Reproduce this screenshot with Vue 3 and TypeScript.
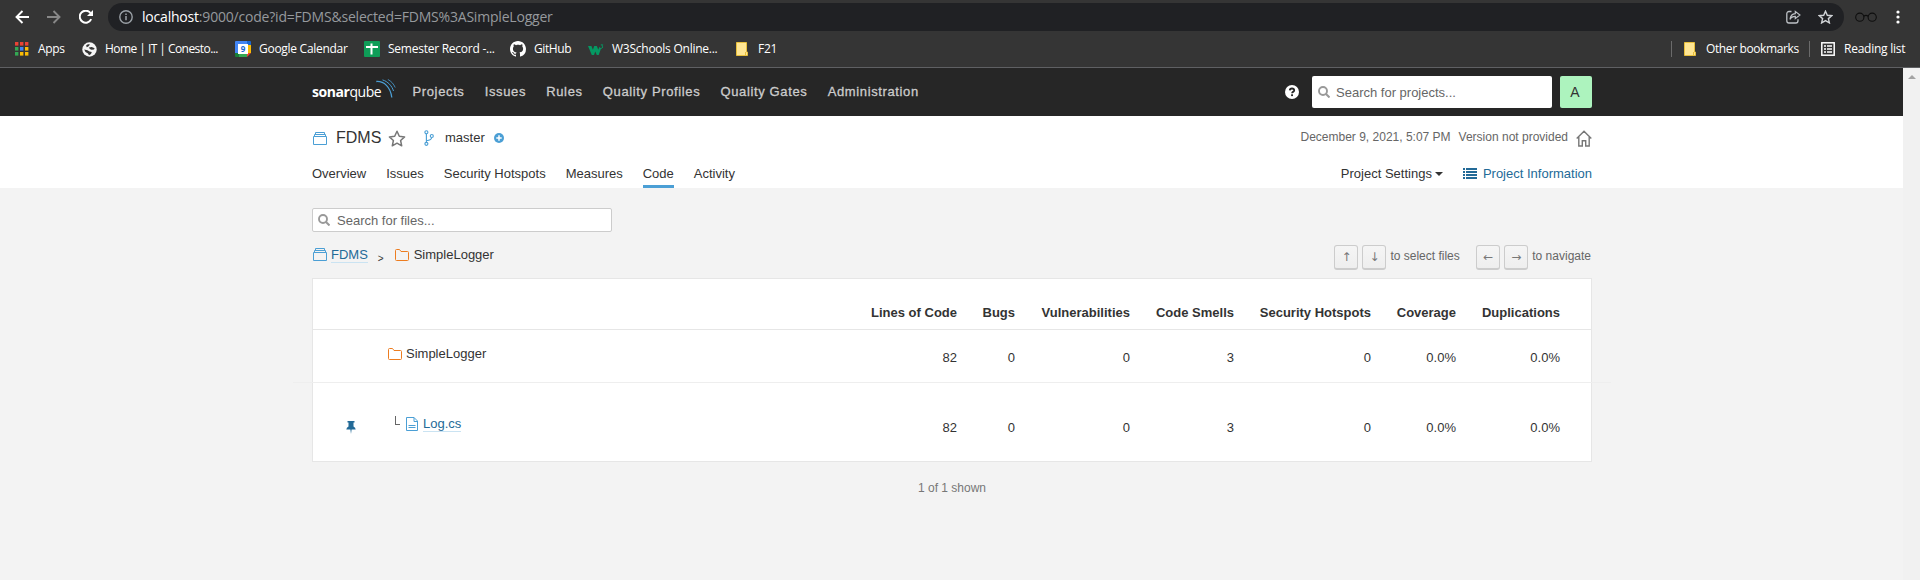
<script setup lang="ts">
interface Bookmark { icon: string; label: string; width: number; spacing: number }
interface Column { label: string; width: number }
interface FileRow { name: string; kind: 'folder' | 'file'; values: string[] }

const bookmarks: Bookmark[] = [
  { icon: 'apps', label: 'Apps', width: 67, spacing: -0.35 },
  { icon: 'globe', label: 'Home | IT | Conesto...', width: 153, spacing: -0.55 },
  { icon: 'calendar', label: 'Google Calendar', width: 129, spacing: -0.28 },
  { icon: 'sheet', label: 'Semester Record -...', width: 146, spacing: -0.25 },
  { icon: 'github', label: 'GitHub', width: 79, spacing: -0.4 },
  { icon: 'w3', label: 'W3Schools Online...', width: 146, spacing: -0.25 },
  { icon: 'note', label: 'F21', width: 60, spacing: -0.25 },
]
const navItems: string[] = ['Projects', 'Issues', 'Rules', 'Quality Profiles', 'Quality Gates', 'Administration']
const tabs: string[] = ['Overview', 'Issues', 'Security Hotspots', 'Measures', 'Code', 'Activity']
const columns: Column[] = [
  { label: 'Lines of Code', width: 100 },
  { label: 'Bugs', width: 58 },
  { label: 'Vulnerabilities', width: 115 },
  { label: 'Code Smells', width: 104 },
  { label: 'Security Hotspots', width: 137 },
  { label: 'Coverage', width: 85 },
  { label: 'Duplications', width: 104 },
]
const rows: FileRow[] = [
  { name: 'SimpleLogger', kind: 'folder', values: ['82', '0', '0', '3', '0', '0.0%', '0.0%'] },
  { name: 'Log.cs', kind: 'file', values: ['82', '0', '0', '3', '0', '0.0%', '0.0%'] },
]
const appColors: string[] = ['#ea4335', '#ea4335', '#ea4335', '#34a853', '#4285f4', '#fbbc05', '#34a853', '#fbbc05', '#fbbc05']
</script>

<template>
  <div class="window">
    <header class="chrome">
      <div class="toolbar">
        <svg width="14" height="14" viewBox="0 0 14 14"><path d="M14 7H1.5M7.5 1L1.5 7l6 6" fill="none" stroke="#fff" stroke-width="1.9" /></svg>
        <svg class="forward" width="14" height="14" viewBox="0 0 14 14"><path d="M0 7h12.5M6.5 1l6 6-6 6" fill="none" stroke="#888" stroke-width="1.9" /></svg>
        <svg class="reload" width="14" height="14" viewBox="0 0 14 14"><path d="M12.2 9.2A6 6 0 1 1 11.5 3" fill="none" stroke="#fff" stroke-width="2" /><path d="M14 0v6H8z" fill="#fff" /></svg>
        <div class="omnibox">
          <svg width="14" height="14" viewBox="0 0 14 14"><circle cx="7" cy="7" r="6.2" fill="none" stroke="#9aa0a6" stroke-width="1.4" /><path d="M7 6v4.3M7 3.4v1.5" stroke="#9aa0a6" stroke-width="1.5" /></svg>
          <span class="url"><b>localhost</b>:9000/code?id=FDMS&amp;selected=FDMS%3ASimpleLogger</span>
          <svg class="share" width="15" height="14" viewBox="0 0 15 14"><path d="M5.5 1.5H3A2.2 2.2 0 0 0 .8 3.7v7.1A2.2 2.2 0 0 0 3 13h6.8a2.2 2.2 0 0 0 2.2-2.2V9.2" fill="none" stroke="#bdc1c6" stroke-width="1.3" /><path d="M9.3 1.4L13.9 5 9.3 8.6V6.4C6.6 6.4 5 7.3 4 9.4 4.3 6.5 6 3.9 9.3 3.6z" fill="none" stroke="#bdc1c6" stroke-width="1.2" /></svg>
          <svg class="star" width="15" height="14" viewBox="0 0 15 14"><path d="M7.5 1.2l1.8 4.1 4.4.4-3.3 2.9 1 4.3-3.9-2.3-3.9 2.3 1-4.3-3.3-2.9 4.4-.4z" fill="none" stroke="#d0d3d6" stroke-width="1.4" /></svg>
        </div>
        <svg class="glasses" width="22" height="10" viewBox="0 0 22 10"><circle cx="4.8" cy="5.2" r="4.1" fill="none" stroke="#0e0e0e" stroke-width="1.1" /><circle cx="17.2" cy="5.2" r="4.1" fill="none" stroke="#0e0e0e" stroke-width="1.1" /><path d="M8.8 4.2q2.2-1.6 4.4 0" fill="none" stroke="#0e0e0e" stroke-width="1.1" /></svg>
        <svg class="dots" width="4" height="14" viewBox="0 0 4 14"><circle cx="2" cy="2" r="1.6" fill="#fff" /><circle cx="2" cy="7" r="1.6" fill="#fff" /><circle cx="2" cy="12" r="1.6" fill="#fff" /></svg>
      </div>
      <div class="bookmarks">
        <div v-for="b in bookmarks" :key="b.label" class="bookmark" :class="b.icon" :style="{ width: b.width + 'px', letterSpacing: b.spacing + 'px' }">
          <svg v-if="b.icon === 'apps'" width="14" height="14" viewBox="0 0 14 14"><rect v-for="(c, i) in appColors" :key="i" :x="(i % 3) * 5" :y="Math.floor(i / 3) * 5" width="3.4" height="3.6" :fill="c" /></svg>
          <svg v-else-if="b.icon === 'globe'" width="15" height="15" viewBox="0 0 15 15"><circle cx="7.5" cy="7.5" r="7.2" fill="#f5f5f5" /><path d="M4.2 3.2Q6 1.800 8 2.600L6.300 4.600 4.600 5.200zM6.800 5.600l3-.6 2.800 1.200-.6 1.300-2.500.2-1.600-.6zM2.200 7.600l3.300.6 2 1.400 2.300.4-.8 2-2 1.200L6 11.500 3.500 10z" fill="#353535" /></svg>
          <svg v-else-if="b.icon === 'calendar'" width="16" height="16" viewBox="0 0 16 16"><path d="M0 1q0-1 1-1h12v4H4v9H0z" fill="#4285f4" /><path d="M12 0h3q1 0 1 1v3h-4z" fill="#1967d2" /><path d="M12 4h4v8h-4z" fill="#fbbc04" /><path d="M4 12h8v4H4z" fill="#34a853" /><path d="M0 12h4v4H1q-1 0-1-1z" fill="#188038" /><path d="M12 16v-4h4z" fill="#ea4335" /><path d="M3 3h10v10H3z" fill="#fff" /><text x="8" y="11" text-anchor="middle" class="cal-day">9</text></svg>
          <svg v-else-if="b.icon === 'sheet'" width="16" height="16" viewBox="0 0 16 16"><rect width="16" height="16" rx="1" fill="#0f9d58" /><path d="M2 6h12M7.5 2.5v11" stroke="#fff" stroke-width="2" /></svg>
          <svg v-else-if="b.icon === 'github'" width="16" height="16" viewBox="0 0 16 16"><path fill="#fff" d="M8 0C3.58 0 0 3.58 0 8c0 3.54 2.29 6.53 5.47 7.59.4.07.55-.17.55-.38 0-.19-.01-.82-.01-1.49-2.01.37-2.53-.49-2.69-.94-.09-.23-.48-.94-.82-1.13-.28-.15-.68-.52-.01-.53.63-.01 1.08.58 1.23.82.72 1.21 1.87.87 2.33.66.07-.52.28-.87.51-1.07-1.78-.2-3.64-.89-3.64-3.95 0-.87.31-1.59.82-2.15-.08-.2-.36-1.02.08-2.12 0 0 .67-.21 2.2.82.64-.18 1.32-.27 2-.27s1.36.09 2 .27c1.53-1.04 2.2-.82 2.2-.82.44 1.1.16 1.92.08 2.12.51.56.82 1.27.82 2.15 0 3.07-1.87 3.75-3.65 3.95.29.25.54.73.54 1.48 0 1.07-.01 1.93-.01 2.2 0 .21.15.46.55.38A8.01 8.01 0 0 0 16 8c0-4.42-3.58-8-8-8z" /></svg>
          <svg v-else-if="b.icon === 'w3'" width="16" height="11" viewBox="0 0 16 11"><path d="M0 2h3.4l1.5 3.7L6.2 2h2.6l1.5 3.7 1-2.7 1.8 1.2-2.4 6.8H8.8L7.3 7.5 6 11H3.8z" fill="#059862" /><path d="M12.8.8h2L13.800 2q2.200.8.2 2.200h-1.200" fill="none" stroke="#059862" stroke-width=".9" /></svg>
          <svg v-else width="12" height="14" viewBox="0 0 12 14"><path d="M.5.5h10V10h1v3.5H.5z" fill="#ffe694" stroke="#e8bf3b" /><path d="M9.5 13.5V10" stroke="#e8bf3b" /></svg>
          <span>{{ b.label }}</span>
        </div>
        <div class="right-bookmarks">
          <div class="bookmark note other">
            <svg width="12" height="14" viewBox="0 0 12 14"><path d="M.5.5h10V10h1v3.5H.5z" fill="#ffe694" stroke="#e8bf3b" /><path d="M9.5 13.5V10" stroke="#e8bf3b" /></svg>
            <span>Other bookmarks</span>
          </div>
          <div class="bookmark reading">
            <svg width="14" height="14" viewBox="0 0 14 14"><rect x=".8" y=".8" width="12.4" height="12.4" fill="none" stroke="#fff" stroke-width="1.5" /><path d="M3 4h2m1 0h5M3 7h2m1 0h5M3 10h2m1 0h5" stroke="#fff" stroke-width="1.7" /></svg>
            <span>Reading list</span>
          </div>
        </div>
      </div>
    </header>

    <div class="viewport">
      <main class="page">
        <nav class="global-nav">
          <div class="container nav-row">
            <div class="logo">
              <b>sonar</b><span>qube</span>
              <svg class="waves" width="20" height="19" viewBox="0 0 20 19"><path d="M.3 2.5C8 2 14.5 8 15.8 18.5" fill="none" stroke="#4b9fd5" stroke-width="1.3" /><path d="M6.5.9C12 2.5 16 7 17.5 12" fill="none" stroke="#4b9fd5" stroke-width="1" /><path d="M11.8.4C15 2 17.8 5 19.2 8.5" fill="none" stroke="#4b9fd5" stroke-width=".8" /></svg>
            </div>
            <a v-for="item in navItems" :key="item">{{ item }}</a>
            <div class="nav-right">
              <svg width="14" height="14" viewBox="0 0 14 14"><circle cx="7" cy="7" r="7" fill="#fff" /><path d="M4.8 5.4Q4.900 3.5 7 3.5t2.2 1.7Q9.2 6.2 8 6.9 7.1 7.4 7.1 8.3" fill="none" stroke="#262626" stroke-width="1.8" /><rect x="6.1" y="9.3" width="1.9" height="1.8" fill="#262626" /></svg>
              <div class="search project-search">
                <svg width="12" height="12" viewBox="0 0 12 12"><circle cx="5" cy="5" r="4" fill="none" stroke="#999" stroke-width="1.9" /><path d="M8 8l3.5 3.5" stroke="#999" stroke-width="2" /></svg>
                <span>Search for projects...</span>
              </div>
              <div class="avatar">A</div>
            </div>
          </div>
        </nav>

        <section class="context">
          <div class="container">
            <div class="project-row">
              <svg width="14" height="13" viewBox="0 0 14 13"><path d="M.5 4.5h13v8H.5zM1.5 4V2.5h11V4M2.5 2V.5h9V2" fill="none" stroke="#4b9fd5" /></svg>
              <span class="project-name">FDMS</span>
              <svg width="18" height="17" viewBox="0 0 18 17"><path d="M9 1.3l2.3 5 5.3.6-4 3.6 1.1 5.3L9 13.2l-4.7 2.6 1.1-5.3-4-3.6 5.3-.6z" fill="none" stroke="#777" stroke-width="1.5" stroke-linejoin="round" /></svg>
              <svg class="branch" width="10" height="16" viewBox="0 0 10 16"><g fill="none" stroke="#4b9fd5" stroke-width="1.15"><circle cx="2.4" cy="2.2" r="1.5" /><circle cx="2.4" cy="13.8" r="1.5" /><circle cx="7.8" cy="6" r="1.5" /><path d="M2.4 3.7v8.6M7.7 7.5Q7.5 10 2.5 10.8" /></g></svg>
              <span class="branch-name">master</span>
              <svg width="10" height="10" viewBox="0 0 10 10"><circle cx="5" cy="5" r="5" fill="#4b9fd5" /><path d="M5 2.3v5.4M2.3 5h5.4" stroke="#fff" stroke-width="1.5" /></svg>
              <div class="project-meta">
                <span>December 9, 2021, 5:07 PM</span>
                <span class="version">Version not provided</span>
                <svg width="16" height="17" viewBox="0 0 16 17"><path d="M.7 8.6L8 1.2l7.3 7.4M2.8 7v9h3.5v-5.2h3.4V16h3.5V7" fill="none" stroke="#777" stroke-width="1.4" /></svg>
              </div>
            </div>
            <div class="tab-row">
              <a v-for="tab in tabs" :key="tab" :class="{ active: tab === 'Code' }">{{ tab }}</a>
              <div class="tab-actions">
                <span>Project Settings</span>
                <i class="caret"></i>
                <svg width="14" height="11" viewBox="0 0 14 11"><path d="M0 1h2M3 1h11M0 4h2M3 4h11M0 7h2M3 7h11M0 10h2M3 10h11" stroke="#236a97" stroke-width="1.8" /></svg>
                <span class="info-link">Project Information</span>
              </div>
            </div>
          </div>
        </section>

        <div class="container content">
          <div class="search file-search">
            <svg width="12" height="12" viewBox="0 0 12 12"><circle cx="5" cy="5" r="4" fill="none" stroke="#999" stroke-width="1.9" /><path d="M8 8l3.5 3.5" stroke="#999" stroke-width="2" /></svg>
            <span>Search for files...</span>
          </div>
          <div class="crumb-row">
            <div class="crumbs">
              <svg width="14" height="13" viewBox="0 0 14 13"><path d="M.5 4.5h13v8H.5zM1.5 4V2.5h11V4M2.5 2V.5h9V2" fill="none" stroke="#4b9fd5" /></svg>
              <a class="link">FDMS</a>
              <span class="sep">&gt;</span>
              <svg width="14" height="12" viewBox="0 0 14 12"><path d="M.5 10.5v-9q0-1 1-1h3l1.5 2h6.500q1 0 1 1v7q0 1-1 1h-11q-1 0-1-1z" fill="none" stroke="#ed7d20" /></svg>
              <span class="crumb-name">SimpleLogger</span>
            </div>
            <div class="shortcuts">
              <kbd>↑</kbd><kbd>↓</kbd><span class="select-hint">to select files</span>
              <kbd>←</kbd><kbd>→</kbd><span>to navigate</span>
            </div>
          </div>

          <div class="panel">
            <div class="row head">
              <div v-for="c in columns" :key="c.label" class="cell" :style="{ width: c.width + 'px' }">{{ c.label }}</div>
            </div>
            <div v-for="r in rows" :key="r.name" class="row" :class="r.kind">
              <div v-if="r.kind === 'folder'" class="name">
                <svg width="14" height="12" viewBox="0 0 14 12"><path d="M.5 10.5v-9q0-1 1-1h3l1.5 2h6.500q1 0 1 1v7q0 1-1 1h-11q-1 0-1-1z" fill="none" stroke="#ed7d20" /></svg>
                <span>{{ r.name }}</span>
              </div>
              <div v-else class="name">
                <svg class="pin" width="10" height="13" viewBox="0 0 10 13"><path d="M1.5 0h7v1.4h-1v4q2 1 2.2 3H5.6L5 13l-.6-4.600H.3q.2-2 2.2-3v-4h-1z" fill="#236a97" /></svg>
                <i class="elbow"></i>
                <svg width="12" height="14" viewBox="0 0 12 14"><path d="M.5.5h7.5l3.5 3.5v9.500H.5zM8 .5V4.5h3.5M2.500 8.500h7M2.500 10.500h7" fill="none" stroke="#4b9fd5" /></svg>
                <a class="link">{{ r.name }}</a>
              </div>
              <div v-for="(v, i) in r.values" :key="i" class="cell" :style="{ width: columns[i].width + 'px' }">{{ v }}</div>
            </div>
          </div>
          <p class="count">1 of 1 shown</p>
        </div>
      </main>
      <aside class="scrollbar"><i></i></aside>
    </div>
  </div>
</template>

<style>
body { margin: 0; background: #f3f3f3; overflow: hidden; }
</style>

<style scoped>
* { box-sizing: border-box; }
svg { display: block; flex: none; }
.window { width: 1920px; height: 580px; overflow: hidden; font-family: "Liberation Sans", Arial, sans-serif; font-size: 13px; color: #333; white-space: nowrap; }
.chrome { height: 68px; background: #353535; border-bottom: 1px solid #5f6063; font-family: "Open Sans", sans-serif; color: #fff; }
.toolbar { height: 34px; display: flex; align-items: center; padding-left: 15px; }
.forward { margin-left: 18px; }
.reload { margin-left: 18px; }
.omnibox { width: 1736px; height: 28px; margin-left: 15px; border-radius: 14px; background: #202124; display: flex; align-items: center; padding: 0 11px; }
.url { margin-left: 9px; font-size: 14px; line-height: 20px; letter-spacing: -0.2px; color: #96999d; }
.url b { font-weight: 400; color: #fff; }
.share { margin-left: auto; }
.star { margin-left: 17px; }
.glasses { margin-left: 11px; }
.dots { margin-left: 19px; }
.bookmarks { height: 30px; display: flex; align-items: center; padding-left: 15px; }
.bookmark { display: flex; align-items: center; height: 30px; font-size: 12px; letter-spacing: -0.25px; flex: none; }
.bookmark span { margin-left: 8px; padding-bottom: 2px; }
.apps span { margin-left: 9px; }
.w3 svg { margin: 1px 0 0 -1px; }
.w3 span { margin-left: 8px; }
.note svg { margin-left: 1px; }
.note span { margin-left: 10px; }
.cal-day { font: 700 8px "Open Sans", sans-serif; fill: #1967d2; letter-spacing: 0; }
.right-bookmarks { display: flex; margin-left: auto; align-items: center; width: 249px; }
.right-bookmarks::before { content: ""; width: 1px; height: 16px; background: #6b6b6b; margin-right: 11px; }
.other { width: 126px; letter-spacing: -0.38px; }
.reading { width: 100px; }
.reading::before { content: ""; width: 1px; height: 16px; background: #6b6b6b; margin-right: 11px; }
.reading span { margin-left: 9px; }

.viewport { display: flex; height: 512px; }
.page { width: 1903px; background: #f3f3f3; }
.scrollbar { width: 17px; background: #f1f1f1; padding-top: 7px; }
.scrollbar i { display: block; margin: 0 auto; width: 0; height: 0; border: 4px solid transparent; border-top: 0; border-bottom-color: #a3a3a3; }
.container { width: 1280px; margin-left: 312px; }
.global-nav { height: 48px; background: #262626; }
.nav-row { display: flex; align-items: center; height: 48px; }
.nav-row a { color: #ccc; font-size: 13px; letter-spacing: 0.63px; margin-right: 20.2px; padding-bottom: 2px; -webkit-text-stroke: 0.3px #ccc; }
.logo { position: relative; width: 100.5px; height: 48px; color: #fff; font: 14px/48px "Open Sans", sans-serif; letter-spacing: -0.45px; }
.logo b { font-weight: 700; }
.waves { position: absolute; left: 64px; top: 11px; }
.nav-right { display: flex; align-items: center; margin-left: auto; }
.search { display: flex; align-items: center; background: #fff; border-radius: 2px; color: #666; }
.project-search { width: 240px; height: 32px; margin-left: 13px; padding-left: 6px; }
.project-search span { margin-left: 6px; }
.avatar { width: 32px; height: 32px; margin-left: 8px; border-radius: 2px; background: #adf3be; text-align: center; line-height: 32px; font-size: 14px; padding-right: 2px; }
.context { height: 72px; background: #fff; }
.project-row { display: flex; align-items: center; height: 44px; padding: 0 0 0 1px; }
.project-name { margin-left: 9px; font-size: 16px; line-height: 20px; width: 52px; padding-bottom: 1px; }
.branch { margin-left: 18px; }
.branch-name { margin-left: 11px; width: 49px; padding-bottom: 1px; }
.project-meta { display: flex; align-items: center; margin-left: auto; font-size: 12px; color: #666; height: 34px; }
.project-meta span { line-height: 34px; margin-top: -2px; }
.version { margin-left: 8px; }
.project-meta svg { margin-left: 8px; }
.tab-row { display: flex; height: 28px; }
.tab-row a { height: 28px; margin-right: 20px; line-height: 15px; padding-top: 6px; }
.tab-row a.active { border-bottom: 3px solid #4b9fd5; }
.tab-actions { display: flex; margin-left: auto; align-items: flex-start; padding-top: 6px; line-height: 15px; }
.caret { border: 4px solid transparent; border-top-color: #333; border-bottom: 0; margin: 6px 20px 0 3px; }
.tab-actions svg { margin-top: 2px; }
.info-link { margin-left: 6px; color: #236a97; }
.content { padding-top: 20px; }
.file-search { width: 300px; height: 24px; border: 1px solid #ccc; padding-left: 5px; }
.file-search span { margin-left: 7px; }
.crumb-row { display: flex; justify-content: space-between; height: 46px; }
.crumbs { display: flex; padding: 16px 0 0 1px; align-items: flex-start; line-height: 14px; }
.link { color: #236a97; border-bottom: 1px solid #cae3f2; line-height: 14px; }
.crumbs .link { margin-left: 4px; }
.sep { font-size: 10px; margin: 4px 11px 0 10px; }
.crumbs svg:last-of-type { margin-top: 1px; }
.crumb-name { margin-left: 5px; }
.shortcuts { display: flex; padding: 13px 1px 0 0; font-size: 12px; color: #666; line-height: 16px; }
kbd { width: 24px; height: 25px; margin-right: 4px; border: 1px solid #ccc; border-bottom-width: 2px; border-radius: 3px; background: linear-gradient(#f5f5f5, #eee); font: 12px/22px "DejaVu Sans", sans-serif; text-align: center; color: #777; }
.shortcuts span { padding-top: 3px; }
.select-hint { margin-right: 16.5px; }
.panel { border: 1px solid #e6e6e6; height: 184px; background: #fff; }
.row { display: flex; justify-content: flex-end; position: relative; padding-right: 31px; }
.cell { text-align: right; line-height: 15px; flex: none; }
.head { height: 51px; border-bottom: 1px solid #e6e6e6; font-weight: 700; padding-top: 26px; }
.folder { height: 53px; padding-top: 20px; }
.folder::after { content: ""; position: absolute; left: -20px; right: -20px; bottom: 0; height: 1px; background: #eee; }
.file { padding-top: 37px; }
.name { display: flex; margin-right: auto; align-items: flex-start; line-height: 15px; }
.folder .name { padding-left: 75px; margin-top: -4px; }
.folder .name svg { margin-top: 2px; }
.folder .name span { margin-left: 4px; }
.file .name { padding-left: 33px; margin-top: -3px; }
.pin { margin-top: 4px; }
.elbow { width: 5px; height: 9px; border: solid #666; border-width: 0 0 1px 1px; margin: -1px 6px 0 39px; }
.file .name .link { margin-left: 5px; }
.count { margin: 0; padding-top: 19px; text-align: center; font-size: 12px; line-height: 14px; color: #777; }
</style>
